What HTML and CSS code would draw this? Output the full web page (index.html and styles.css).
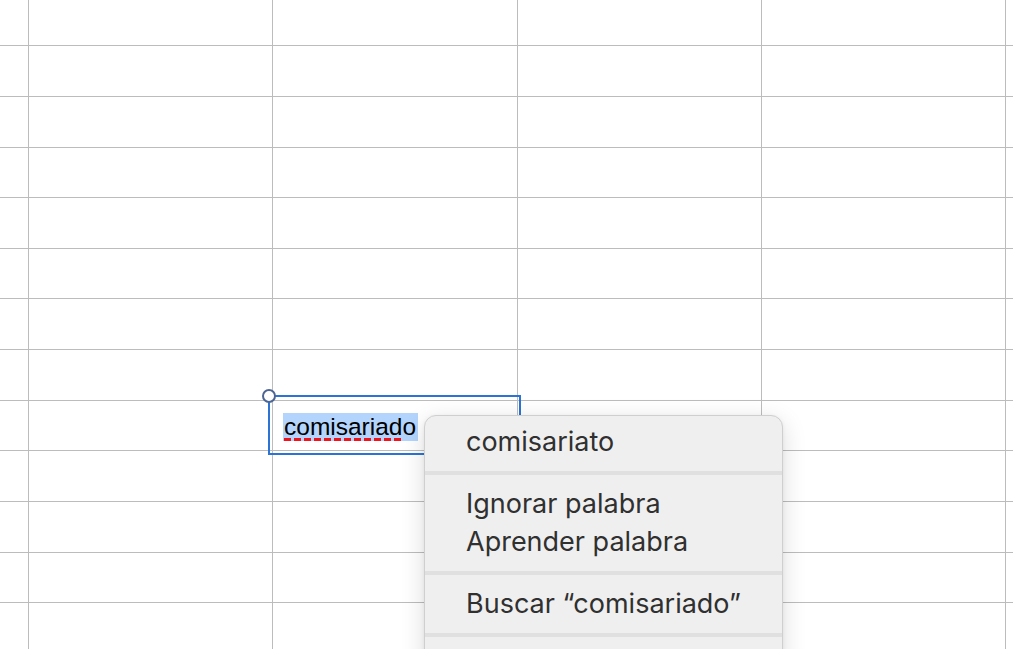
FILE: index.html
```html
<!DOCTYPE html>
<html lang="es">
<head>
<meta charset="utf-8">
<title>Hoja</title>
<link rel="stylesheet" href="styles.css">
</head>
<body>
<div class="sheet">
  <div class="c"></div><div class="c"></div><div class="c"></div><div class="c"></div><div class="c"></div><div class="c"></div>
  <div class="c"></div><div class="c"></div><div class="c"></div><div class="c"></div><div class="c"></div><div class="c"></div>
  <div class="c"></div><div class="c"></div><div class="c"></div><div class="c"></div><div class="c"></div><div class="c"></div>
  <div class="c"></div><div class="c"></div><div class="c"></div><div class="c"></div><div class="c"></div><div class="c"></div>
  <div class="c"></div><div class="c"></div><div class="c"></div><div class="c"></div><div class="c"></div><div class="c"></div>
  <div class="c"></div><div class="c"></div><div class="c"></div><div class="c"></div><div class="c"></div><div class="c"></div>
  <div class="c"></div><div class="c"></div><div class="c"></div><div class="c"></div><div class="c"></div><div class="c"></div>
  <div class="c"></div><div class="c"></div><div class="c"></div><div class="c"></div><div class="c"></div><div class="c"></div>
  <div class="c"></div><div class="c"></div><div class="c"></div><div class="c"></div><div class="c"></div><div class="c"></div>
  <div class="c"></div><div class="c"></div><div class="c"></div><div class="c"></div><div class="c"></div><div class="c"></div>
  <div class="c"></div><div class="c"></div><div class="c"></div><div class="c"></div><div class="c"></div><div class="c"></div>
  <div class="c"></div><div class="c"></div><div class="c"></div><div class="c"></div><div class="c"></div><div class="c"></div>
  <div class="c"></div><div class="c"></div><div class="c"></div><div class="c"></div><div class="c"></div><div class="c"></div>
</div>

<div class="editor">
  <span class="handle"></span>
  <span class="word">comisariado</span>
</div>

<div class="menu">
  <div class="item">comisariato</div>
  <div class="sep"></div>
  <div class="item">Ignorar palabra</div>
  <div class="item">Aprender palabra</div>
  <div class="sep"></div>
  <div class="item">Buscar “comisariado”</div>
  <div class="sep"></div>
</div>
</body>
</html>
```

FILE: styles.css
```css
html, body {
  margin: 0;
  padding: 0;
  width: 1013px;
  height: 649px;
  overflow: hidden;
  background: #ffffff;
}

.sheet {
  display: grid;
  grid-template-columns: 28px 243px 244px 243px 243px 1fr;
  grid-template-rows: 45px 50px 50px 49px 50px 49px 50px 50px 49px 50px 50px 49px 1fr;
  gap: 1px;
  background: #bcbcbc;
  width: 1013px;
  height: 649px;
}

.c {
  background: #ffffff;
}

.editor {
  position: absolute;
  left: 268px;
  top: 395px;
  width: 253px;
  height: 60px;
  box-sizing: border-box;
  border: 2px solid #2b74d6;
  display: flex;
  align-items: center;
  padding-left: 13px;
}

.handle {
  position: absolute;
  left: -8px;
  top: -8px;
  width: 10px;
  height: 10px;
  border-radius: 50%;
  background: #ffffff;
  border: 2px solid #4d6592;
}

.word {
  position: relative;
  font-family: "Liberation Sans", Arial, sans-serif;
  font-size: 24.5px;
  line-height: 28px;
  color: #000000;
  background: #b3d5fd;
  padding: 0 2px 0 1px;
  margin-top: 4px;
}

.word::after {
  content: "";
  position: absolute;
  left: 1px;
  top: 25px;
  width: 120px;
  height: 3px;
  background: repeating-linear-gradient(90deg, #f0141a 0 7px, transparent 7px 10px);
}

.menu {
  position: absolute;
  left: 424px;
  top: 415px;
  width: 359px;
  padding: 7px 0 40px;
  background: #efefef;
  border: 1px solid #cfcfcf;
  border-radius: 12px;
  box-shadow: 0 6px 24px rgba(0, 0, 0, 0.14), 0 1px 4px rgba(0, 0, 0, 0.06);
  box-sizing: border-box;
  font-family: "Inter", "Noto Sans", sans-serif;
  color: #303030;
}

.item {
  height: 38px;
  line-height: 38px;
  padding-left: 41px;
  font-size: 27px;
  white-space: nowrap;
}

.sep {
  height: 4px;
  margin: 10px 0;
  background: #e0e0e0;
}
```
